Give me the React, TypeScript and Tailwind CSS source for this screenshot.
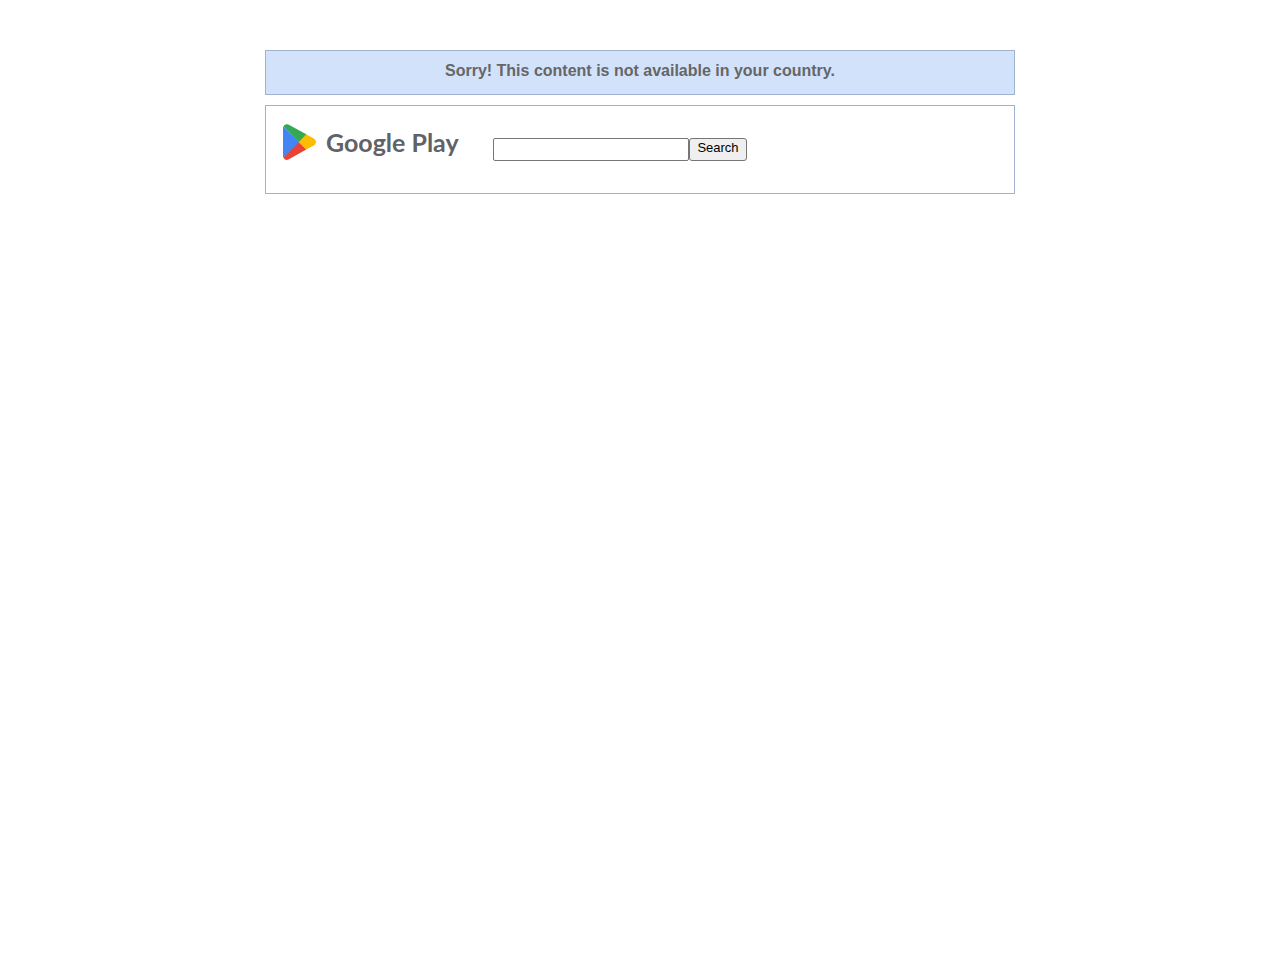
import React from "react";

const PlayMark = () => {
  return (
    <svg viewBox="0 0 33 36" className="h-9 w-[33px] shrink-0" aria-hidden="true">
      <path d="M15.7 17.2 0.4 33.3c0.6 2.1 2.9 3.3 5 2.2L23.3 25.4l-7.6-8.2z" fill="#EA4335" />
      <path d="M30.8 14.6 23.2 10.2 14.8 17.6l8.5 8 7.5-4.2c2.8-1.5 2.8-5.3 0-6.8z" fill="#FBBC04" />
      <path d="M0.4 2.5C0.2 2.8 0 3.3 0 3.8v28.4c0 .5.1 1 .4 1.4L16.2 18.1 0.4 2.5z" fill="#4285F4" />
      <path d="M15.8 17.9 23.3 10.3 5.8 0.7C3.7-.5 1 .5.4 2.6L15.8 17.9z" fill="#34A853" />
    </svg>
  );
};

const App = () => {
  return (
    <main
      className="mx-auto mt-[50px] w-full max-w-[750px]"
      style={{ fontFamily: '"Liberation Sans", Arial, sans-serif' }}
    >
      <div className="border border-[#9fb3d1] bg-[#d3e2fb] pt-2.5 pb-[13px] text-center">
        <p className="text-base leading-5 font-bold text-[#666]">
          Sorry! This content is not available in your country.
        </p>
      </div>

      <div className="mt-2.5 flex items-start border border-[#9fb3d1] px-[17px] pt-[18px] pb-8">
        <a href="#" className="flex items-center text-[#5f6368]">
          <PlayMark />
          <span className="ml-2.5 w-[135px] font-['Lato',sans-serif] text-[25px] leading-9 font-bold whitespace-nowrap">
            Google Play
          </span>
        </a>
        <form className="mt-3.5 ml-8 flex" onSubmit={(e) => e.preventDefault()}>
          <input
            type="text"
            name="q"
            aria-label="Search"
            className="h-[23px] w-[196px] rounded-xs border border-[#767676] bg-white px-1 text-[13px]"
          />
          <button
            type="submit"
            className="h-[23px] w-[58px] rounded-[3px] border border-[#767676] bg-[#efefef] pb-1 text-[13px] leading-4 text-black"
          >
            Search
          </button>
        </form>
      </div>
    </main>
  );
};

export default App;
